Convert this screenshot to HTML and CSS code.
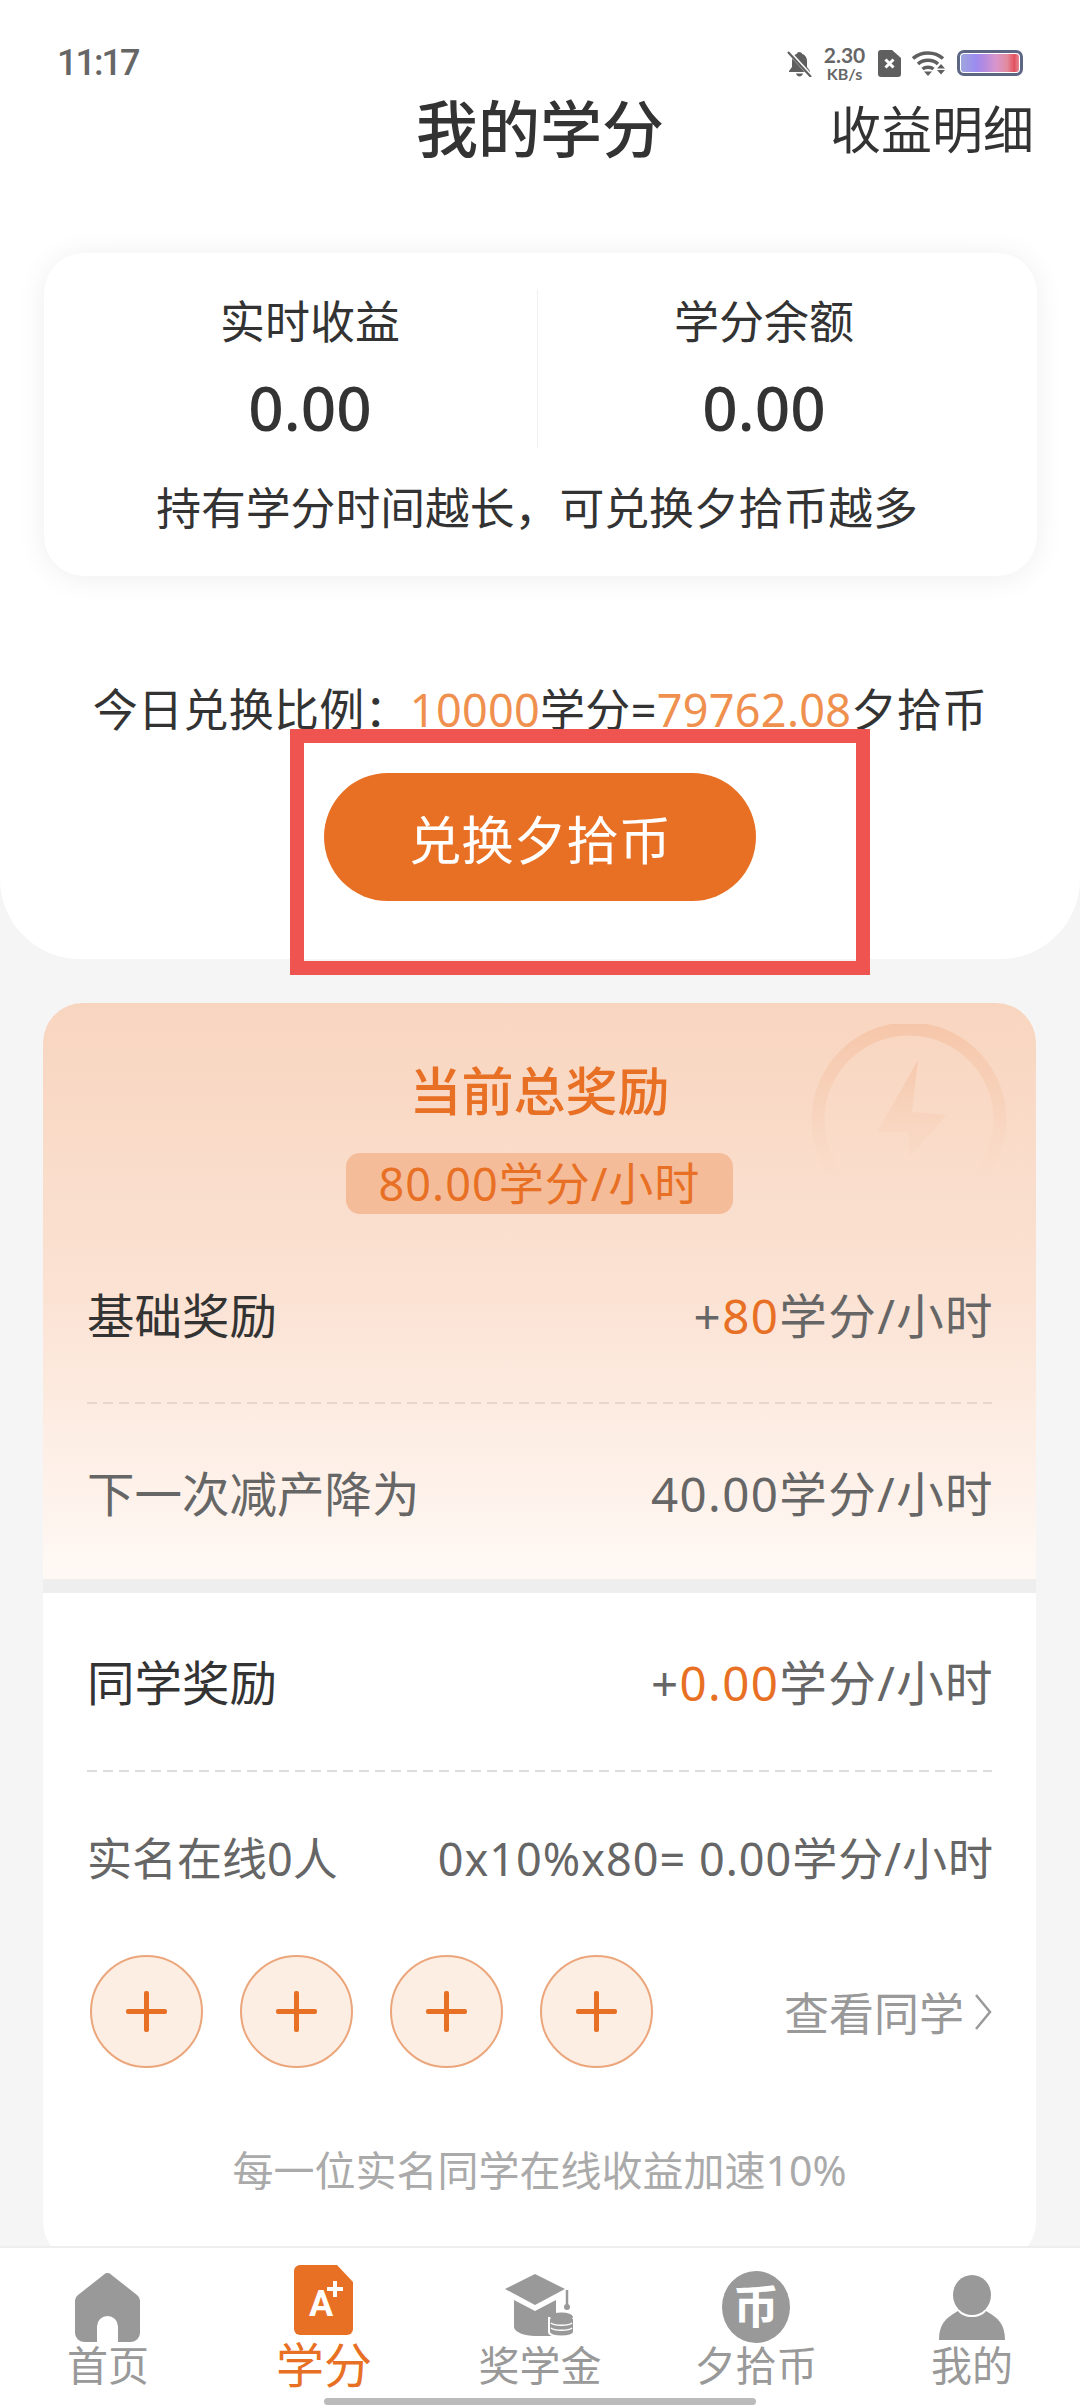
FILE: index.html
```html
<!DOCTYPE html>
<html lang="zh-CN">
<head>
  <meta charset="UTF-8">
  <meta name="viewport" content="width=device-width, initial-scale=1.0">
  <title>我的学分</title>
  <link rel="stylesheet" href="styles.css">
</head>
<body>
  <div class="page">
    <div class="top">
      <!-- 状态栏 -->
      <div class="status">
        <span class="time">11:17</span>
        <div class="status-icons">
          <svg class="ic-bell" viewBox="0 0 25 27">
            <path d="M12 2c-1 0-2 .8-2 1.8C6.800 4.800 5 7.500 5 11v6l-3 4v1h21v-1l-3-4v-6c0-3.500-2-6.200-5-7.200C15 2.800 13.500 2 12 2zM9 23.500c.5 1.800 2 3 3.500 3s3-1.200 3.500-3z" fill="#5f5f5f"/>
            <path d="M1.500 1.500 24 26" stroke="#fff" stroke-width="4"/>
            <path d="M1 2l23 25" stroke="#5f5f5f" stroke-width="2.200"/>
          </svg>
          <div class="speed"><span class="speed-num">2.30</span><span class="speed-unit">KB/s</span></div>
          <svg class="ic-sim" viewBox="0 0 23 27">
            <path d="M3 0h11l9 8v16a3 3 0 0 1-3 3H3a3 3 0 0 1-3-3V3a3 3 0 0 1 3-3z" fill="#5f5f5f"/>
            <path d="M7.500 9.500l8 8M15.500 9.500l-8 8" stroke="#fff" stroke-width="3"/>
          </svg>
          <svg class="ic-wifi" viewBox="0 0 34 26">
            <g fill="none" stroke="#5f5f5f" stroke-width="3.500">
              <path d="M1 8.500C9 1 23 1 31 8.500"/>
              <path d="M6 14c5.500-5 14.500-5 20 0"/>
              <path d="M10.500 19c3-2.500 8-2.500 11 0"/>
            </g>
            <path d="M12 21.500h8l-4 4.500zM29 14l4 4.500h-8zM25 20h8l-4 4.500z" fill="#5f5f5f"/>
          </svg>
          <div class="battery"><div class="battery-fill"></div></div>
        </div>
      </div>
      <!-- 标题 -->
      <div class="nav">
        <span></span>
        <h1 class="nav-title">我的学分</h1>
        <a class="nav-link">收益明细</a>
      </div>
      <!-- 余额卡片 -->
      <div class="balance">
        <div class="balance-row">
          <div class="balance-col">
            <div class="balance-label">实时收益</div>
            <div class="balance-num">0.00</div>
          </div>
          <div class="balance-col balance-col-r">
            <div class="balance-label">学分余额</div>
            <div class="balance-num">0.00</div>
          </div>
        </div>
        <div class="balance-note">持有学分时间越长，可兑换夕拾币越多</div>
      </div>
      <div class="rate">今日兑换比例：<span class="light">10000</span>学分=<span class="light">79762.08</span>夕拾币</div>
      <button class="exchange">兑换夕拾币</button>
    </div>

    <div class="reward">
      <div class="reward-top">
        <svg class="bolt" viewBox="0 0 200 170">
          <defs>
            <linearGradient id="fade" gradientUnits="userSpaceOnUse" x1="0" y1="0" x2="0" y2="165">
              <stop offset="0" stop-color="#f6c6a9"/>
              <stop offset="0.55" stop-color="#f7d0b8" stop-opacity=".6"/>
              <stop offset="1" stop-color="#f9dcc9" stop-opacity="0"/>
            </linearGradient>
            <linearGradient id="fade2" gradientUnits="userSpaceOnUse" x1="0" y1="36" x2="0" y2="136">
              <stop offset="0" stop-color="#f5c6a9" stop-opacity=".85"/>
              <stop offset="1" stop-color="#f7d2bb" stop-opacity=".15"/>
            </linearGradient>
          </defs>
          <path d="M42 166A91 91 0 1 1 158 166" fill="none" stroke="url(#fade)" stroke-width="13"/>
          <path d="M109 36 68 108h31l2 25 36-42-34-3z" fill="url(#fade2)"/>
        </svg>
        <div class="reward-title">当前总奖励</div>
        <div class="reward-chip">80.00学分/小时</div>
        <div class="row row-first">
          <span class="row-name">基础奖励</span>
          <span class="row-val">+<em>80</em>学分/小时</span>
        </div>
        <div class="dash dash-warm"></div>
        <div class="row row-next">
          <span class="row-name row-name-gray">下一次减产降为</span>
          <span class="row-val">40.00学分/小时</span>
        </div>
      </div>
      <div class="reward-gap"></div>
      <div class="reward-bottom">
        <div class="row row-up">
          <span class="row-name">同学奖励</span>
          <span class="row-val">+<em>0.00</em>学分/小时</span>
        </div>
        <div class="dash"></div>
        <div class="row row-up row-small">
          <span class="row-name row-name-gray">实名在线0人</span>
          <span class="row-val">0x10%x80= 0.00学分/小时</span>
        </div>
        <div class="mates">
          <div class="mate"></div>
          <div class="mate"></div>
          <div class="mate"></div>
          <div class="mate"></div>
          <a class="mates-more">查看同学<svg class="chevron" viewBox="0 0 18 36"><path d="M2 1l14 17L2 35" fill="none" stroke="#999" stroke-width="2.500"/></svg></a>
        </div>
        <div class="reward-note">每一位实名同学在线收益加速10%</div>
      </div>
    </div>

    <!-- 底部导航 -->
    <div class="tabbar">
      <div class="tab">
        <svg class="tab-icon ic-home" viewBox="0 0 65 69">
          <path d="M29 1.500a5 5 0 0 1 7 0L62 22a7 7 0 0 1 3 6v32a9 9 0 0 1-9 9H43V53.500a10.500 10.500 0 0 0-21 0V69H9a9 9 0 0 1-9-9V28a7 7 0 0 1 3-6z" fill="#999"/>
        </svg>
        <span>首页</span>
      </div>
      <div class="tab tab-on">
        <svg class="tab-icon ic-credit" viewBox="0 0 59 70">
          <path d="M6 0h37l16 17v47a6 6 0 0 1-6 6H6a6 6 0 0 1-6-6V6a6 6 0 0 1 6-6z" fill="#e87025"/>
          <text x="27" y="51" class="ic-a">A</text>
          <path d="M41 16v16M33 24h16" stroke="#fff" stroke-width="4"/>
        </svg>
        <span>学分</span>
      </div>
      <div class="tab">
        <svg class="tab-icon ic-hat" viewBox="0 0 70 63">
          <path d="M30 0 60 15 30 31 0 15z" fill="#999"/>
          <path d="M9 26l21 11 21-11v36H30c-10 0-21-4-21-9z" fill="#999"/>
          <path d="M62 16v15" stroke="#999" stroke-width="2.500"/>
          <circle cx="62" cy="33" r="3" fill="#999"/>
          <g fill="#999" stroke="#fff" stroke-width="2">
            <path d="M44 44v14c0 6 25 6 25 0V44z" />
          </g>
          <g fill="#999">
            <ellipse cx="56.500" cy="43" rx="11.500" ry="4.500"/>
          </g>
          <path d="M46 49c3 3 18 3 21 0M46 54c3 3 18 3 21 0" fill="none" stroke="#fff" stroke-width="1.500"/>
        </svg>
        <span>奖学金</span>
      </div>
      <div class="tab">
        <svg class="tab-icon ic-coin" viewBox="0 0 68 72">
          <ellipse cx="34" cy="36" rx="34" ry="36" fill="#999"/>
          <text x="34" y="52" class="ic-bi">币</text>
        </svg>
        <span>夕拾币</span>
      </div>
      <div class="tab">
        <svg class="tab-icon ic-user" viewBox="0 0 66 65">
          <ellipse cx="33" cy="20" rx="19" ry="20" fill="#999"/>
          <path d="M0 65c0-15 6-22 19-29 3 4 8 6 14 6s11-2 14-6c13 7 19 14 19 29z" fill="#999"/>
        </svg>
        <span>我的</span>
      </div>
      <div class="home-bar"></div>
    </div>

    <!-- 红框标注 -->
    <div class="mark"></div>
  </div>
</body>
</html>
```

FILE: styles.css
```css
html, body {
  margin: 0;
  padding: 0;
  height: 2408px;
  overflow: hidden;
}

body {
  background-color: #f5f5f5;
  font-family: "Noto Sans", "Noto Sans CJK SC", sans-serif;
  color: #333;
}

.page {
  position: relative;
  width: 1080px;
  height: 2408px;
  overflow: hidden;
}

.top {
  background-color: #fff;
  height: 959px;
  border-radius: 0 0 80px 80px;
  display: flex;
  flex-direction: column;
  align-items: center;
}

/* 状态栏 */
.status {
  width: 100%;
  box-sizing: border-box;
  height: 90px;
  padding: 36px 57px 0;
  display: flex;
  justify-content: space-between;
  align-items: center;
}
.time {
  font-family: Roboto, sans-serif;
  font-size: 36px;
  font-weight: 500;
  letter-spacing: -2px;
  color: #666;
}
.status-icons {
  display: flex;
  align-items: center;
}
.ic-bell {
  width: 25px;
  height: 27px;
}
.speed {
  display: flex;
  flex-direction: column;
  align-items: center;
  margin-left: 11px;
  width: 43px;
  font-family: Lato, sans-serif;
  font-weight: 700;
  color: #666;
}
.speed-num {
  font-size: 21px;
  line-height: 20px;
}
.speed-unit {
  font-size: 16px;
  line-height: 17px;
}
.ic-sim {
  width: 23px;
  height: 27px;
  margin-left: 12px;
}
.ic-wifi {
  width: 34px;
  height: 26px;
  margin-left: 11px;
}
.battery {
  width: 66px;
  height: 26px;
  margin-left: 11px;
  box-sizing: border-box;
  border: 3px solid #5d6785;
  border-radius: 7px;
  padding: 1px;
}
.battery-fill {
  height: 100%;
  border-radius: 3px;
  background: linear-gradient(90deg, #9fa6dc, #9b8cf0 25%, #b58ae0 40%, #d896cc 60%, #e28a9c 80%, #e3505f 92%, #e58a96);
}

/* 标题 */
.nav {
  width: 100%;
  box-sizing: border-box;
  height: 78px;
  padding: 0 46px;
  display: grid;
  grid-template-columns: 1fr auto 1fr;
  align-items: center;
  line-height: 78px;
}
.nav-title {
  margin: 0;
  font-size: 62px;
  font-weight: 500;
}
.nav-link {
  justify-self: end;
  font-size: 51px;
}

/* 余额卡片 */
.balance {
  width: 993px;
  height: 323px;
  box-sizing: border-box;
  margin-top: 85px;
  padding: 36px 46px 0 40px;
  background-color: #fff;
  border-radius: 40px;
  box-shadow: 0 2px 30px rgba(0, 0, 0, 0.07);
}
.balance-row {
  display: flex;
  height: 159px;
}
.balance-col {
  flex: 1;
  display: flex;
  flex-direction: column;
  align-items: center;
}
.balance-col-r {
  border-left: 1px solid #f0f0f0;
}
.balance-label {
  height: 66px;
  line-height: 66px;
  font-size: 45px;
}
.balance-num {
  margin-top: 7px;
  height: 90px;
  line-height: 90px;
  font-size: 62px;
  font-weight: 500;
}
.balance-note {
  margin-top: 30px;
  height: 60px;
  line-height: 60px;
  font-size: 44.800px;
  text-align: center;
}

.rate {
  margin-top: 104px;
  height: 60px;
  line-height: 60px;
  font-size: 45px;
  letter-spacing: 0.300px;
  white-space: nowrap;
}
.light {
  color: #f0904f;
}
.exchange {
  margin-top: 33px;
  width: 432px;
  height: 128px;
  border: none;
  border-radius: 64px;
  background-color: #e87025;
  color: #fff;
  font-family: inherit;
  font-size: 52.500px;
}

/* 奖励卡片 */
.reward {
  width: 993px;
  margin: 44px 0 0 43px;
}
.reward-top {
  position: relative;
  height: 576px;
  box-sizing: border-box;
  padding: 53px 44px 0;
  border-radius: 40px 40px 0 0;
  background: linear-gradient(#f8d5bf, #fbe2d3 50%, #fff9f5);
  display: flex;
  flex-direction: column;
}
.bolt {
  position: absolute;
  left: 766px;
  top: 21px;
  width: 200px;
  height: 170px;
}
.reward-title {
  position: relative;
  height: 70px;
  line-height: 70px;
  text-align: center;
  font-size: 52px;
  font-weight: 500;
  color: #e87025;
}
.reward-chip {
  position: relative;
  align-self: center;
  width: 387px;
  height: 61px;
  line-height: 61px;
  margin-top: 27px;
  border-radius: 14px;
  background-color: #f5bc99;
  color: #e87025;
  font-size: 45px;
  letter-spacing: 1px;
  text-align: center;
}
.row {
  box-sizing: border-box;
  height: 174px;
  display: flex;
  justify-content: space-between;
  align-items: center;
  font-size: 47.500px;
}
.row-first {
  margin-top: 14px;
  padding-bottom: 2px;
}
.row-next {
  height: 176px;
}
.row-up {
  padding-bottom: 6px;
}
.row-small {
  font-size: 45px;
}
.row-name {
  color: #333;
}
.row-name-gray {
  color: #666;
}
.row-val {
  margin-right: -2px;
  color: #666;
  letter-spacing: 1.400px;
}
.row-small .row-val {
  letter-spacing: 1px;
}
.row-val em {
  font-style: normal;
  color: #e87025;
}
.dash {
  height: 2px;
  background: repeating-linear-gradient(90deg, #ddd 0 10px, transparent 10px 16px);
}
.dash-warm {
  background: repeating-linear-gradient(90deg, #e8d6ca 0 10px, transparent 10px 16px);
}
.reward-gap {
  height: 14px;
  background-color: #eee;
}
.reward-bottom {
  height: 669px;
  box-sizing: border-box;
  padding: 3px 44px 0;
  border-radius: 0 0 40px 40px;
  background-color: #fff;
}
.mates {
  margin-top: 9px;
  display: flex;
  align-items: center;
  gap: 37px;
  padding-left: 3px;
}
.mate {
  position: relative;
  width: 113px;
  height: 113px;
  box-sizing: border-box;
  border: 2px solid #eba67c;
  border-radius: 50%;
  background-color: #fdeee4;
}
.mate::before,
.mate::after {
  content: "";
  position: absolute;
  background-color: #e87025;
  border-radius: 2px;
}
.mate::before {
  left: 34px;
  top: 52px;
  width: 41px;
  height: 5px;
}
.mate::after {
  left: 52px;
  top: 34px;
  width: 5px;
  height: 41px;
}
.mates-more {
  margin-left: auto;
  display: flex;
  align-items: center;
  font-size: 45px;
  color: #999;
}
.chevron {
  width: 18px;
  height: 36px;
  margin-left: 10px;
}
.reward-note {
  margin-top: 72px;
  height: 60px;
  line-height: 60px;
  text-align: center;
  font-size: 41px;
  color: #aaa;
}

/* 底部导航 */
.tabbar {
  position: absolute;
  left: 0;
  right: 0;
  bottom: 0;
  height: 162px;
  box-sizing: border-box;
  border-top: 2px solid #eee;
  background-color: #fff;
  display: flex;
}
.tab {
  position: relative;
  flex: 1;
  display: flex;
  flex-direction: column;
  align-items: center;
  justify-content: flex-end;
  padding-bottom: 15px;
  font-size: 41px;
  line-height: 56px;
  color: #999;
}
.tab-on {
  font-size: 48px;
  color: #e87025;
}
.tab-icon {
  position: absolute;
}
.ic-home {
  left: 75px;
  top: 25px;
  width: 65px;
  height: 69px;
}
.ic-credit {
  left: 78px;
  top: 17px;
  width: 59px;
  height: 70px;
}
.ic-hat {
  left: 73px;
  top: 26px;
  width: 70px;
  height: 63px;
}
.ic-coin {
  left: 74px;
  top: 23px;
  width: 68px;
  height: 72px;
}
.ic-user {
  left: 75px;
  top: 27px;
  width: 66px;
  height: 65px;
}
.ic-a {
  font-family: Roboto, sans-serif;
  font-size: 36px;
  font-weight: 700;
  fill: #fff;
  text-anchor: middle;
}
.ic-bi {
  font-family: "Noto Sans CJK SC", sans-serif;
  font-size: 46px;
  font-weight: 700;
  fill: #fff;
  text-anchor: middle;
}
.home-bar {
  position: absolute;
  left: 324px;
  bottom: 3px;
  width: 432px;
  height: 7px;
  border-radius: 4px;
  background-color: #bbb;
}

/* 红框 */
.mark {
  position: absolute;
  left: 290px;
  top: 729px;
  width: 580px;
  height: 246px;
  box-sizing: border-box;
  border: 14px solid #f05450;
}
```
